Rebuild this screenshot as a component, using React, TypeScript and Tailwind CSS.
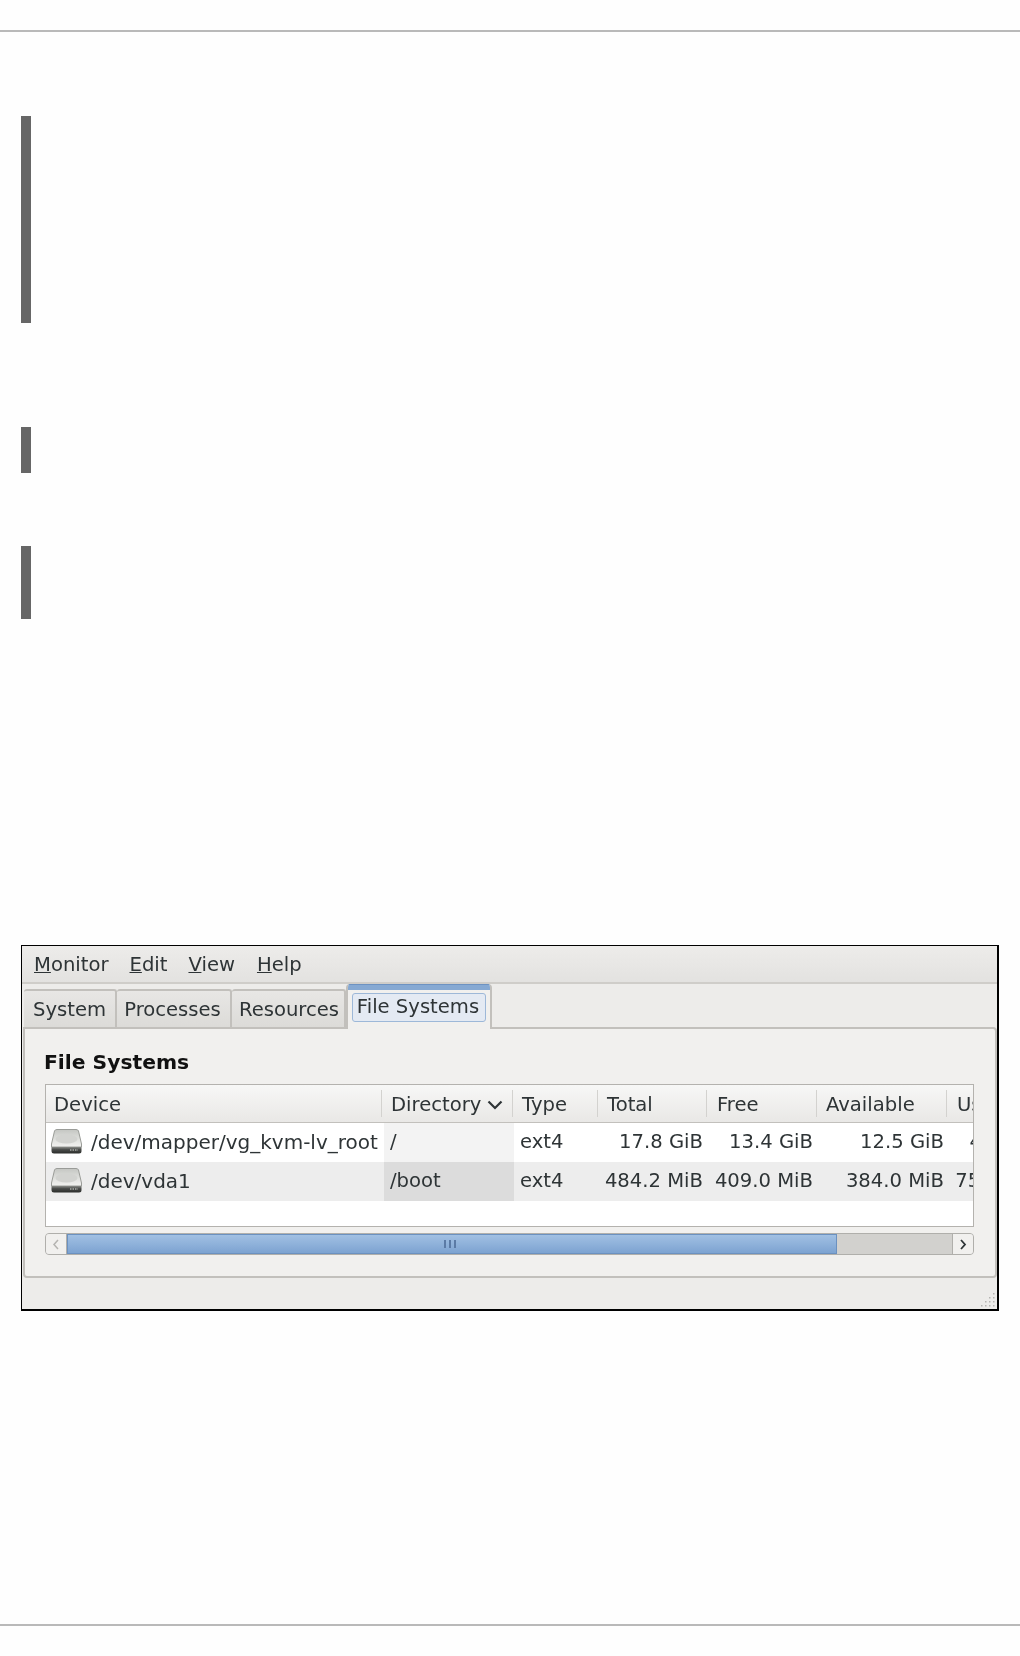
import React from 'react';

const font = "font-['DejaVu_Sans',sans-serif]";

const columns = [
  { label: 'Device', width: 'w-[335px]', pad: 'pl-[8px]' },
  { label: 'Directory', width: 'w-[131px]', pad: 'pl-[9px]', sorted: true },
  { label: 'Type', width: 'w-[85px]', pad: 'pl-[9px]' },
  { label: 'Total', width: 'w-[109px]', pad: 'pl-[9px]' },
  { label: 'Free', width: 'w-[110px]', pad: 'pl-[10px]' },
  { label: 'Available', width: 'w-[130px]', pad: 'pl-[9px]' },
  { label: 'Used', width: 'w-[100px]', pad: 'pl-[10px]' },
];

const rows = [
  { device: '/dev/mapper/vg_kvm-lv_root', dir: '/', type: 'ext4', total: '17.8 GiB', free: '13.4 GiB', avail: '12.5 GiB', used: '4.4 GiB' },
  { device: '/dev/vda1', dir: '/boot', type: 'ext4', total: '484.2 MiB', free: '409.0 MiB', avail: '384.0 MiB', used: '75.2 MiB' },
];

const DiskIcon = () => (
  <svg width="31" height="25" viewBox="0 0 31 25" className="shrink-0">
    <defs>
      <linearGradient id="disk-top" x1="0" y1="0" x2="0" y2="1">
        <stop offset="0" stopColor="#c4c6c2" />
        <stop offset="0.55" stopColor="#dfe0dd" />
        <stop offset="1" stopColor="#f2f2f0" />
      </linearGradient>
      <linearGradient id="disk-base" x1="0" y1="0" x2="0" y2="1">
        <stop offset="0" stopColor="#8a8c88" />
        <stop offset="0.4" stopColor="#4a4c4a" />
        <stop offset="1" stopColor="#2b2d2b" />
      </linearGradient>
    </defs>
    <path d="M3.5 2 Q4 0.5 6 0.5 H25 Q27 0.5 27.5 2 L30.5 15 V18 H0.5 V15 Z" fill="url(#disk-top)" stroke="#9a9c98" strokeWidth="1" />
    <ellipse cx="15.5" cy="10" rx="11" ry="4.5" fill="#d2d3d0" />
    <path d="M0.5 18 H30.5 V22 Q30.5 24.5 28 24.5 H3 Q0.5 24.5 0.5 22 Z" fill="url(#disk-base)" />
    <path d="M19 21 H27" stroke="#a8aaa6" strokeWidth="1.5" strokeDasharray="1.5 1" />
  </svg>
);

const Row = ({ row, even }: { row: (typeof rows)[number]; even: boolean }) => (
  <div className={`flex h-[39px] items-center w-[1100px] [&>div]:pb-[2px] ${even ? 'bg-[#ededed]' : 'bg-white'}`}>
    <div className="flex items-center w-[338px] pl-[5px] gap-[9px] shrink-0">
      <DiskIcon />
      <span className="text-[20px]">{row.device}</span>
    </div>
    <div className={`h-full flex items-center w-[130px] pl-[6px] shrink-0 ${even ? 'bg-[#dcdcdc]' : 'bg-[#f3f3f3]'}`}>{row.dir}</div>
    <div className="w-[83px] pl-[6px] shrink-0">{row.type}</div>
    <div className="w-[106px] text-right shrink-0">{row.total}</div>
    <div className="w-[110px] text-right shrink-0">{row.free}</div>
    <div className="w-[131px] text-right shrink-0">{row.avail}</div>
    <div className="w-[97px] text-right shrink-0">{row.used}</div>
  </div>
);

const Tab = ({ label, width }: { label: string; width: string }) => (
  <div className={`${width} h-[38px] flex items-center justify-center border-t-2 border-r-2 border-[#c2c0bc] rounded-t-[3px] bg-gradient-to-b from-[#e8e7e5] to-[#dcdbd8] pt-[1px]`}>
    {label}
  </div>
);

export default function App() {
  return (
    <div className={`h-[1656px] flex flex-col bg-[#fefefe] text-[19.6px] leading-none text-[#2e3436] ${font}`}>
      <div className="mt-[30px] h-[2px] bg-[#b9b9b9]" />
      <div className="mt-[84px] ml-[21px] w-[10px] h-[207px] bg-[#666666]" />
      <div className="mt-[104px] ml-[21px] w-[10px] h-[46px] bg-[#666666]" />
      <div className="mt-[73px] ml-[21px] w-[10px] h-[73px] bg-[#666666]" />

      <div className="mt-[326px] ml-[21px] w-[978px] h-[366px] border border-r-2 border-b-2 border-black flex flex-col bg-[#edecea] blur-[0.4px]">
        <div className="h-[38px] shrink-0 flex items-center pl-[12px] gap-[21px] pt-[2px] bg-gradient-to-b from-[#edecea] to-[#e3e2e0] border-b-2 border-[#cfcdc9]">
          <span><u>M</u>onitor</span>
          <span><u>E</u>dit</span>
          <span><u>V</u>iew</span>
          <span className="ml-[1px]"><u>H</u>elp</span>
        </div>

        <div className="flex items-end h-[43px] shrink-0 pl-[2px]">
          <Tab label="System" width="w-[93px]" />
          <Tab label="Processes" width="w-[115px] pr-[2px]" />
          <Tab label="Resources" width="w-[114px] pl-[2px]" />
          <div className="relative z-10 -mb-[2px] w-[146px] h-[45px] flex flex-col bg-[#f1f0ee] border-x-2 border-[#c2c0bc] rounded-t-[4px] overflow-hidden">
            <div className="h-[6px] shrink-0 bg-[#86a9d3] border-t border-[#6e93c2]" />
            <div className="mx-[4px] mt-[3px] h-[29px] pb-[2px] pr-[2px] flex items-center justify-center border border-[#9db8d8] rounded-[3px] bg-[#e4eaf3]">
              File Systems
            </div>
          </div>
        </div>

        <div className="ml-[1px] h-[251px] shrink-0 bg-[#f1f0ee] border-2 border-[#c2c0bc] rounded-[4px] rounded-tl-none px-[20px] pt-[23px]">
          <div className="font-bold h-[32px] -ml-[1px] text-[20.3px] text-[#111111]">File Systems</div>
          <div className="h-[143px] border border-[#b4b2ae] bg-white overflow-hidden w-[929px]">
            <div className="flex h-[38px] w-[1100px] items-center bg-gradient-to-b from-[#f7f7f6] to-[#e9e8e6] border-b border-[#c2c0bc]">
              {columns.map((col, i) => (
                <div
                  key={col.label}
                  className={`${col.width} ${col.pad} h-[27px] pt-[3px] flex items-center shrink-0 ${i > 0 ? 'border-l border-[#d3d2cf]' : ''}`}
                >
                  {col.label}
                  {col.sorted && (
                    <svg width="16" height="10" viewBox="0 0 16 10" className="ml-[6px]">
                      <path d="M1.5 1.5 L8 8 L14.5 1.5" fill="none" stroke="#2e3436" strokeWidth="2.2" />
                    </svg>
                  )}
                </div>
              ))}
            </div>
            {rows.map((row, i) => (
              <Row key={row.device} row={row} even={i % 2 === 1} />
            ))}
          </div>

          <div className="mt-[6px] h-[22px] w-[929px] flex items-stretch bg-[#d2d1ce] border border-[#b0afab] rounded-[4px] overflow-hidden">
            <div className="w-[21px] flex items-center justify-center bg-[#f1f0ee] border-r border-[#b0afab]">
              <svg width="8" height="11" viewBox="0 0 8 11">
                <path d="M6 1 L2 5.5 L6 10" fill="none" stroke="#b5b4b1" strokeWidth="1.5" />
              </svg>
            </div>
            <div className="w-[770px] pr-[4px] flex items-center justify-center gap-[3px] bg-gradient-to-b from-[#a1c0e3] to-[#7da3d1] border border-[#6b91c0]">
              <span className="w-[2px] h-[8px] bg-[#5b7ba6]" />
              <span className="w-[2px] h-[8px] bg-[#5b7ba6]" />
              <span className="w-[2px] h-[8px] bg-[#5b7ba6]" />
            </div>
            <div className="flex-1" />
            <div className="w-[21px] flex items-center justify-center bg-[#f1f0ee] border-l border-[#b0afab]">
              <svg width="8" height="11" viewBox="0 0 8 11">
                <path d="M2 1 L6 5.5 L2 10" fill="none" stroke="#2e3436" strokeWidth="1.8" />
              </svg>
            </div>
          </div>
        </div>

        <div className="relative flex-1 bg-[#edecea]">
          <svg width="16" height="16" viewBox="0 0 16 16" className="absolute right-[2px] bottom-[2px]">
            {[[14, 2], [10, 6], [14, 6], [6, 10], [10, 10], [14, 10], [2, 14], [6, 14], [10, 14], [14, 14]].map(([x, y]) => (
              <rect key={`${x}-${y}`} x={x} y={y} width="1.5" height="1.5" fill="#b5b4b1" />
            ))}
          </svg>
        </div>
      </div>

      <div className="mt-auto mb-[30px] h-[2px] bg-[#b9b9b9]" />
    </div>
  );
}
